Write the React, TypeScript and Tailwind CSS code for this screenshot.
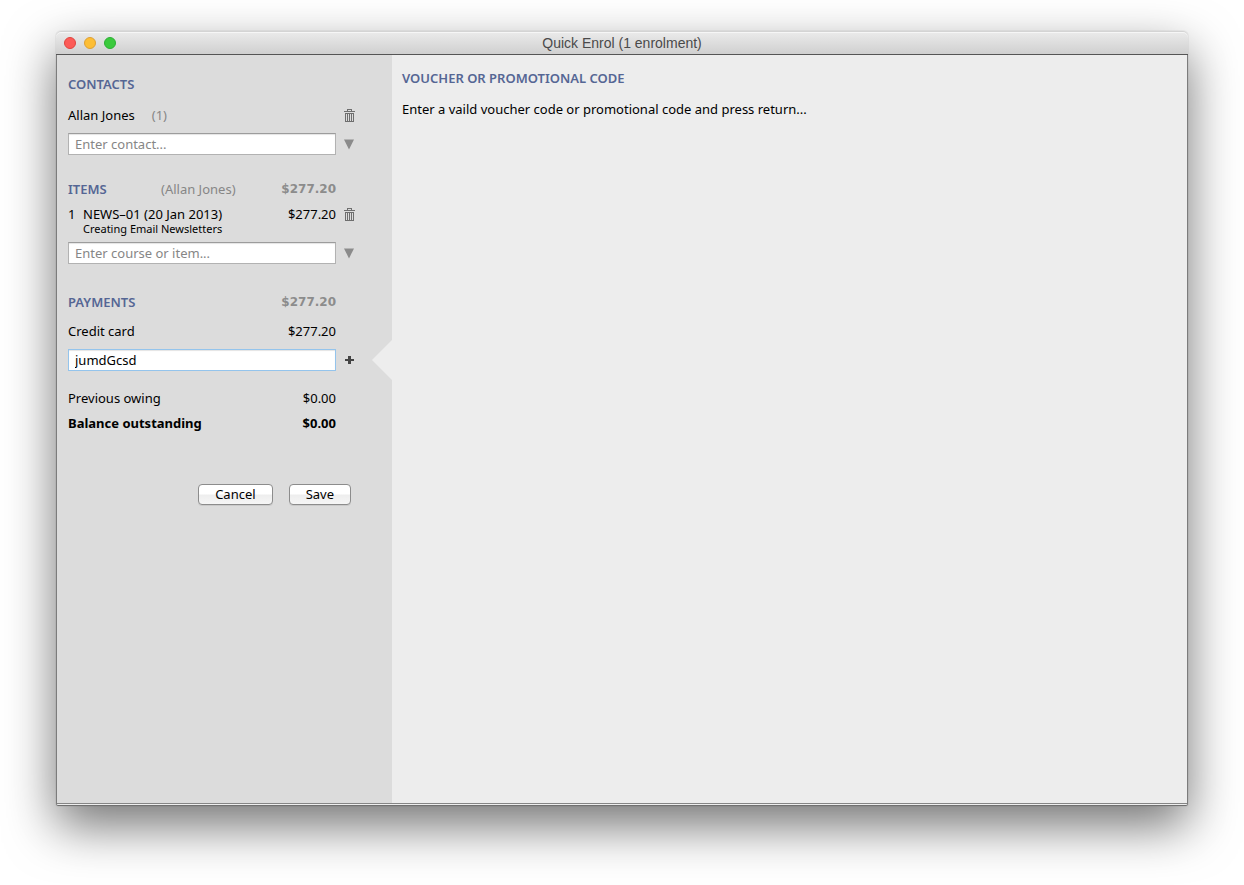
import React, { useState } from "react";

type SvgProps = { className?: string };

function TrashIcon({ className }: SvgProps) {
  return (
    <svg className={className} width="11" height="13" viewBox="0 0 11 13" shapeRendering="crispEdges" aria-hidden="true">
      <path
        fill="currentColor"
        d="M3 0h5v2h3v1H0V2h3zM4 1v1h3V1zM1 4h9v9H1zM2 5v7h1V5zM4 5v7h1V5zM6 5v7h1V5zM8 5v7h1V5z"
        fillRule="evenodd"
      />
    </svg>
  );
}

function TriangleIcon({ className }: SvgProps) {
  return (
    <svg className={className} width="11" height="11" viewBox="0 0 11 11" aria-hidden="true">
      <path fill="currentColor" d="M0 0.4h10L5 10.4z" />
    </svg>
  );
}

function PlusIcon({ className }: SvgProps) {
  return (
    <svg className={className} width="9" height="8" viewBox="0 0 9 8" aria-hidden="true">
      <path fill="currentColor" d="M3 0h3v3h3v2H6v3H3V5H0V3h3z" />
    </svg>
  );
}

function Heading({ children }: { children: React.ReactNode }) {
  return <h2 className="text-[13px] leading-5 font-semibold text-[#556694]">{children}</h2>;
}

function IconButton({ label, children }: { label: string; children: React.ReactNode }) {
  return (
    <button type="button" aria-label={label} className="flex w-[27px] shrink-0 items-center justify-center">
      {children}
    </button>
  );
}

type FieldProps = { label: string; placeholder?: string; initial?: string; active?: boolean };

function Field({ label, placeholder, initial = "", active = false }: FieldProps) {
  const [value, setValue] = useState(initial);
  const border = active ? "border-[#94c4ec]" : "border-[#b2b2b2] border-t-[#9c9c9c]";
  return (
    <input
      type="text"
      aria-label={label}
      value={value}
      placeholder={placeholder}
      onChange={(e) => setValue(e.target.value)}
      className={`h-[22px] min-w-0 flex-1 border bg-white px-1.5 py-0 text-[13px] leading-5 text-black outline-none shadow-[inset_0_1px_1px_#e4e4e4] placeholder:text-[#868686] ${border}`}
    />
  );
}

function Amount({ children }: { children: React.ReactNode }) {
  return <span className="ml-auto">{children}</span>;
}

function Total({ children }: { children: React.ReactNode }) {
  return <span className="ml-auto font-['DejaVu_Sans',sans-serif] text-[12px] font-bold text-[#8c8c8c]">{children}</span>;
}

export default function App() {
  return (
    <div className="flex min-h-screen flex-col bg-white px-14 pt-[31px] pb-[79px] font-['Noto_Sans','Open_Sans',sans-serif] text-[13px] leading-5 text-black">
      <main className="flex flex-1 flex-col rounded-t-[5px] rounded-b-[2px] shadow-[0_0_1px_rgba(0,0,0,0.4),0_20px_50px_rgba(0,0,0,0.55)]">
        <header className="flex h-6 items-center rounded-t-[5px] border-b border-[#555555] bg-linear-to-b from-[#ececec] to-[#d0d0d0] px-2 pt-px shadow-[inset_0_1px_0_#d4d4d4,inset_0_2px_0_#f6f6f6]">
          <div className="flex flex-1 gap-2">
            <button type="button" aria-label="Close" className="size-3 rounded-full border border-[#e0443e] bg-[#fc5b57]" />
            <button type="button" aria-label="Minimise" className="size-3 rounded-full border border-[#dea034] bg-[#fdbe35]" />
            <button type="button" aria-label="Zoom" className="size-3 rounded-full border border-[#2cb034] bg-[#3bca3d]" />
          </div>
          <h1 className="font-['Liberation_Sans',sans-serif] text-[14px] text-[#4a4a4a]">Quick Enrol (1 enrolment)</h1>
          <div className="flex-1" />
        </header>

        <div className="flex flex-1 rounded-b-[2px] border-x border-b border-x-[#7c7c7c] border-b-[#707070] bg-[#ededed] pb-px">
          <aside className="flex w-[335px] shrink-0 flex-col border-b border-[#858585] bg-[#dcdcdc] pt-[19px] pr-[29px] pl-[11px]">
            <section>
              <Heading>CONTACTS</Heading>
              <div className="mt-[11px] flex">
                <div className="flex flex-1 gap-[17px]">
                  <span>Allan Jones</span>
                  <span className="text-[#868686]">(1)</span>
                </div>
                <IconButton label="Remove Allan Jones">
                  <TrashIcon className="text-[#6e6e6e]" />
                </IconButton>
              </div>
              <div className="mt-2 flex">
                <Field label="Contact" placeholder="Enter contact..." />
                <IconButton label="Show contacts">
                  <TriangleIcon className="text-[#8b8b8b]" />
                </IconButton>
              </div>
            </section>

            <section className="mt-6">
              <div className="mr-[27px] grid grid-cols-[93px_1fr_auto]">
                <Heading>ITEMS</Heading>
                <span className="text-[#868686]">(Allan Jones)</span>
                <Total>$277.20</Total>
              </div>
              <div className="mt-[5px] flex items-start">
                <div className="grid flex-1 grid-cols-[15px_1fr_auto]">
                  <span>1</span>
                  <span>NEWS–01 (20 Jan 2013)</span>
                  <span>$277.20</span>
                  <span className="col-span-2 col-start-2 -mt-0.5 text-[11px] leading-[14px]">Creating Email Newsletters</span>
                </div>
                <div className="flex h-5">
                  <IconButton label="Remove NEWS–01">
                    <TrashIcon className="text-[#6e6e6e]" />
                  </IconButton>
                </div>
              </div>
              <div className="mt-1.5 flex">
                <Field label="Course or item" placeholder="Enter course or item..." />
                <IconButton label="Show courses and items">
                  <TriangleIcon className="text-[#8b8b8b]" />
                </IconButton>
              </div>
            </section>

            <section className="mt-7">
              <div className="mr-[27px] flex">
                <Heading>PAYMENTS</Heading>
                <Total>$277.20</Total>
              </div>
              <div className="mt-[9px] mr-[27px] flex">
                <span>Credit card</span>
                <Amount>$277.20</Amount>
              </div>
              <div className="relative mt-2 flex">
                <Field label="Payment or voucher code" initial="jumdGcsd" active />
                <IconButton label="Add payment">
                  <PlusIcon className="text-[#444444]" />
                </IconButton>
                <svg className="absolute top-1/2 -right-[29px] -translate-y-1/2" width="20" height="40" viewBox="0 0 20 40" aria-hidden="true">
                  <path fill="#ededed" d="M20 0v40L0 20z" />
                </svg>
              </div>
              <div className="mt-[17px] mr-[27px] flex">
                <span>Previous owing</span>
                <Amount>$0.00</Amount>
              </div>
              <div className="mt-[5px] mr-[27px] flex font-bold">
                <span>Balance outstanding</span>
                <Amount>$0.00</Amount>
              </div>
            </section>

            <div className="mt-[51px] mr-3 flex justify-end gap-4">
              {["Cancel", "Save"].map((label) => (
                <button
                  key={label}
                  type="button"
                  className="h-[21px] rounded-[4px] border border-[#8c8c8c] bg-linear-to-b from-white from-45% via-[#eeeeee] via-55% to-[#f6f6f6] px-4 leading-[19px] shadow-[0_1px_0_rgba(0,0,0,0.08)]"
                >
                  {label}
                </button>
              ))}
            </div>
          </aside>

          <section className="flex-1 border-b border-[#858585] px-2.5 pt-[13px]">
            <Heading>VOUCHER OR PROMOTIONAL CODE</Heading>
            <p className="mt-[11px]">Enter a vaild voucher code or promotional code and press return...</p>
          </section>
        </div>
      </main>
    </div>
  );
}
